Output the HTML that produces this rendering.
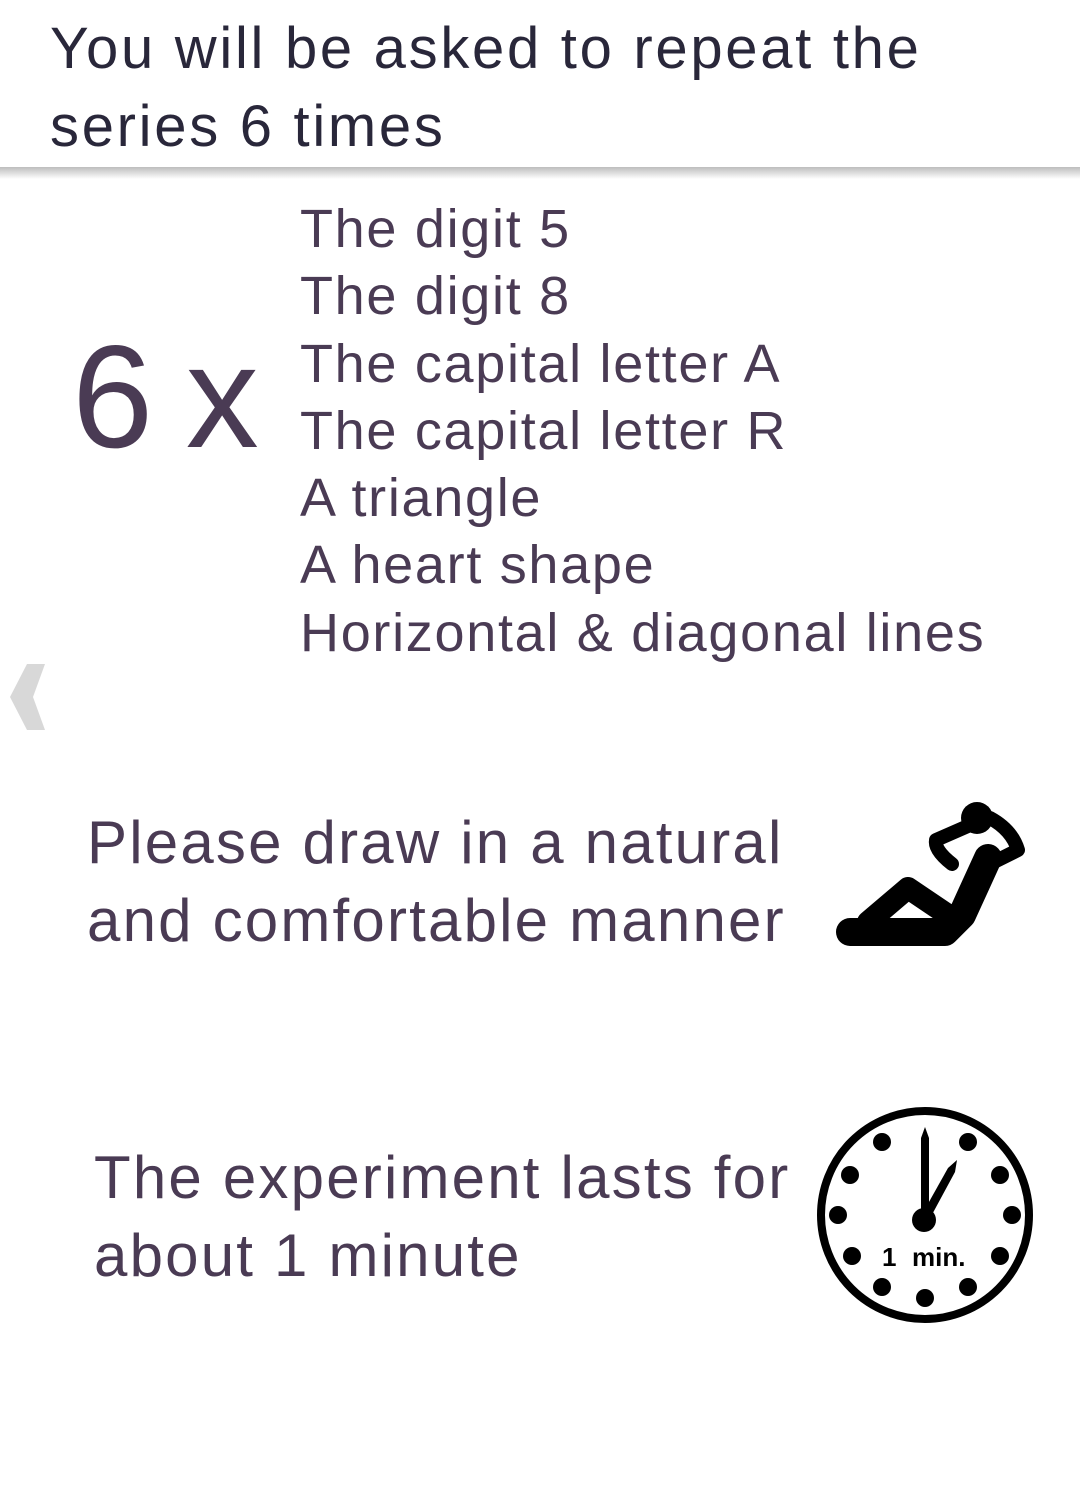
<!DOCTYPE html>
<html><head><meta charset="utf-8"><style>
body{margin:0;width:1080px;height:1502px;background:#fff;position:relative;overflow:hidden;font-family:"Liberation Sans",sans-serif;}
.t{position:absolute;white-space:nowrap;}
.hdr{left:50px;top:10px;font-size:58px;line-height:78px;color:#29273a;letter-spacing:2.7px}
.bar{position:absolute;left:0;top:167px;width:1080px;height:12px;background:linear-gradient(#bdbdbd,#e4e4e4 60%,#fff)}
.list{left:300px;top:196px;font-size:54px;line-height:67.3px;color:#4a3b54;letter-spacing:1.7px}
.six{left:72px;top:322px;font-size:146px;line-height:150px;color:#4a3b54;letter-spacing:-4px}
.p{font-size:60px;line-height:78px;color:#4a3b54;letter-spacing:2.2px}
</style></head><body>
<div class="t hdr">You will be asked to repeat the<br>series 6 times</div>
<div class="bar"></div>
<div class="t six">6 x</div>
<div class="t list">The digit 5<br>The digit 8<br>The capital letter A<br>The capital letter R<br>A triangle<br>A heart shape<br>Horizontal &amp; diagonal lines</div>
<svg style="position:absolute;left:0;top:660px" width="50" height="75"><polygon points="45,4 27,4 10,37 27,70 45,70 33,37" fill="#d8d8d8"/></svg>
<div class="t p" style="left:87px;top:804px">Please draw in a natural<br>and comfortable manner</div>
<div class="t p" style="left:94px;top:1139px">The experiment lasts for<br>about 1 minute</div>
<svg style="position:absolute;left:0;top:0" width="1080" height="1502">
 <g fill="none" stroke="#000" stroke-linecap="round" stroke-linejoin="round">
  <path d="M850 932 H945 L962 915 L988 858" stroke-width="28"/>
  <path d="M868 922 L908 888 L948 915" stroke-width="22"/>
  <path d="M968 826 L936 840 Q934 850 952 864" stroke-width="14"/>
  <path d="M990 818 Q1012 830 1018 850 L994 862" stroke-width="14"/>
 </g>
 <circle cx="977" cy="818" r="16" fill="#000"/>
 <circle cx="925" cy="1215" r="104" fill="#fff" stroke="#000" stroke-width="8"/>
 <g fill="#000">
  <circle cx="882" cy="1142" r="9"/><circle cx="968" cy="1142" r="9"/>
  <circle cx="850" cy="1175" r="9"/><circle cx="1000" cy="1175" r="9"/>
  <circle cx="838" cy="1215" r="9"/><circle cx="1012" cy="1215" r="9"/>
  <circle cx="852" cy="1256" r="9"/><circle cx="1000" cy="1256" r="9"/>
  <circle cx="882" cy="1287" r="9"/><circle cx="968" cy="1287" r="9"/>
  <circle cx="925" cy="1298" r="9"/>
  <circle cx="924" cy="1220" r="12"/>
  <polygon points="921,1222 921,1138 925,1127 929,1138 929,1222"/>
  <polygon points="920,1218 948,1168 957,1160 955,1172 928,1222"/>
  <text x="882" y="1266" font-family="Liberation Sans,sans-serif" font-weight="bold" font-size="26">1</text>
  <text x="912" y="1266" font-family="Liberation Sans,sans-serif" font-weight="bold" font-size="26">min.</text>
 </g>
</svg>
</body></html>
